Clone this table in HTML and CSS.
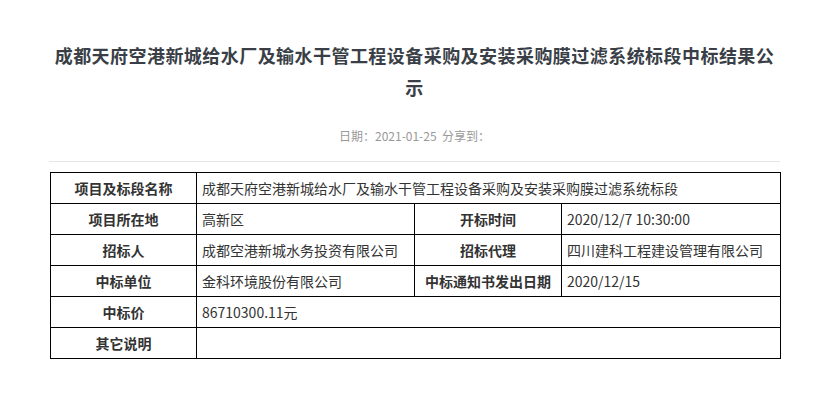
FILE: index.html
```html
<!DOCTYPE html>
<html lang="zh-CN">
<head>
<meta charset="utf-8">
<title>中标结果公示</title>
<link rel="stylesheet" href="styles.css">
</head>
<body>
<div class="page">
  <h1 class="title">成都天府空港新城给水厂及输水干管工程设备采购及安装采购膜过滤系统标段中标结果公示</h1>
  <div class="meta">日期：2021-01-25&nbsp;&nbsp;分享到：</div>
  <div class="rule"></div>
  <table class="info">
    <colgroup>
      <col class="c1"><col class="c2"><col class="c3"><col class="c4">
    </colgroup>
    <tr><th>项目及标段名称</th><td colspan="3">成都天府空港新城给水厂及输水干管工程设备采购及安装采购膜过滤系统标段</td></tr>
    <tr><th>项目所在地</th><td>高新区</td><th>开标时间</th><td>2020/12/7 10:30:00</td></tr>
    <tr><th>招标人</th><td>成都空港新城水务投资有限公司</td><th>招标代理</th><td>四川建科工程建设管理有限公司</td></tr>
    <tr><th>中标单位</th><td>金科环境股份有限公司</td><th>中标通知书发出日期</th><td>2020/12/15</td></tr>
    <tr><th>中标价</th><td colspan="3">86710300.11元</td></tr>
    <tr><th>其它说明</th><td colspan="3"></td></tr>
  </table>
</div>
</body>
</html>
```

FILE: styles.css
```css
html, body {
  margin: 0;
  padding: 0;
  background: #fff;
}
body {
  font-family: "Microsoft YaHei", "Noto Sans CJK SC", "Noto Sans", sans-serif;
  color: #333;
}
.page {
  width: 731px;
  margin: 0 auto;
  padding-top: 39px;
}
.title {
  margin: 0;
  font-size: 18px;
  line-height: 32px;
  font-weight: bold;
  letter-spacing: 0.45px;
  color: #3a3f47;
  text-align: center;
}
.meta {
  margin-top: 23px;
  font-size: 12px;
  line-height: 20px;
  color: #999;
  text-align: center;
}
.rule {
  margin-top: 15px;
  height: 1px;
  background: #e6e6e6;
}
.info {
  margin-top: 10px;
  margin-left: 1px;
  width: 730px;
  border-collapse: collapse;
  table-layout: fixed;
  font-size: 14px;
}
.c1 { width: 146px; }
.c2 { width: 218px; }
.c3 { width: 147px; }
.c4 { width: 219px; }
.info th, .info td {
  border: 1px solid #000;
  height: 30px;
  padding: 0 5px;
  line-height: 20px;
  color: #333;
  white-space: nowrap;
  overflow: hidden;
}
.info th {
  font-weight: bold;
  text-align: center;
  padding: 0 2px;
}
.info td {
  text-align: left;
}
```
